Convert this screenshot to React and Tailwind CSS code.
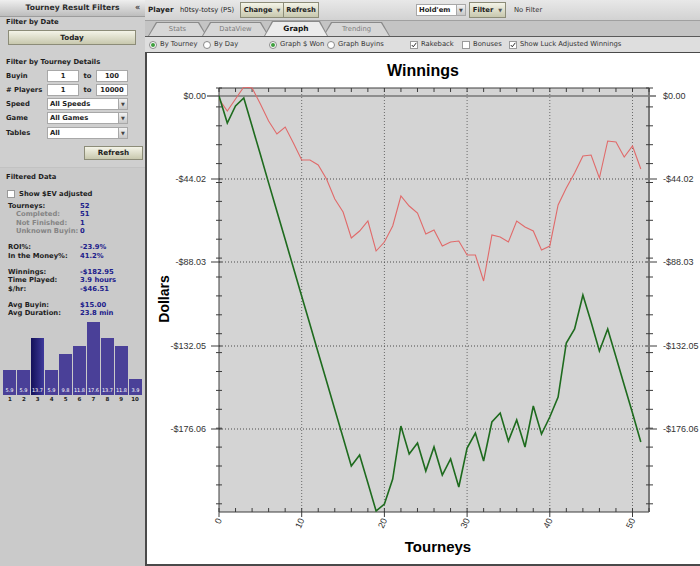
import React from 'react';

// chart geometry, page coordinates (svg viewBox is offset to match)
const X0 = 219, X1 = 649, Y0 = 89, Y1 = 513;
const tx = (t) => X0 + t * 8.27;

const green = [
  97, 124, 107, 99, 127.3, 155.6, 183.9, 212.2, 240.5, 268.8, 297.2, 325.5, 353.8, 382.1, 410.4, 438.7,
  467, 456, 484, 512, 505, 480, 427, 455, 444, 472, 448, 476, 460, 488, 449, 434, 462, 423, 414, 442,
  421, 448, 407, 435, 418, 398, 344, 330, 296, 323, 352, 330, 358, 386, 414, 443,
];
const red = [
  100, 112, 100, 88, 89, 105, 122, 135, 128, 144, 161, 161, 166, 180, 200, 213, 239, 232, 222, 252,
  243, 227, 197, 207, 214, 235, 231, 247, 243, 242, 256, 256, 282, 236, 238, 243, 222, 228, 232, 251,
  247, 206, 189, 174, 157, 156, 179, 142, 143, 158, 147, 170,
];

const yLabels = [
  ['$0.00', 97],
  ['-$44.02', 180],
  ['-$88.03', 263],
  ['-$132.05', 347],
  ['-$176.06', 430],
];

const bars = [5.9, 5.9, 13.7, 5.9, 9.8, 11.8, 17.6, 13.7, 11.8, 3.9];

const pts = (arr) => arr.map((y, i) => `${tx(i).toFixed(1)},${y}`).join(' ');

function WinningsChart() {
  const yTicks = [];
  for (let k = 0; k <= 22; k++) yTicks.push(Y0 + 18.9 * k);
  const xTicks = [];
  for (let k = 0; k <= 26; k++) xTicks.push(k);

  return (
    <svg width="553" height="510" viewBox="147 54 553 510" className="block">
      <defs>
        <clipPath id="plot">
          <rect x={X0} y={Y0 - 1} width={X1 - X0} height={Y1 - Y0 + 1} />
        </clipPath>
      </defs>
      <text x="423" y="77" textAnchor="middle" fontFamily="Liberation Sans, Arial, sans-serif" fontWeight="bold" fontSize="16" fill="#000">
        Winnings
      </text>

      <rect x={X0} y={Y0} width={X1 - X0} height={Y1 - Y0} fill="#d4d4d4" />

      {[10, 20, 30, 40, 50].map((v) => (
        <line key={v} x1={tx(v)} x2={tx(v)} y1={Y0} y2={Y1} stroke="#6a6a6a" strokeWidth="1" strokeDasharray="1 2" />
      ))}
      {yLabels.slice(1).map(([l, y]) => (
        <g key={l}>
          <line x1={X0} x2={X1} y1={y} y2={y} stroke="#4a4a4a" strokeWidth="1" strokeDasharray="1 2" />
          <line x1="211" x2={X0 + 3} y1={y} y2={y} stroke="#3c3c3c" />
          <line x1={X1 - 3} x2="657" y1={y} y2={y} stroke="#3c3c3c" />
        </g>
      ))}
      <line x1="207" x2="656" y1="97" y2="97" stroke="#8e8e8e" strokeWidth="2" />

      {/* axes */}
      <line x1={X0} x2={X0} y1={Y0} y2={Y1} stroke="#3c3c3c" />
      <line x1={X0} x2={X1} y1={Y0} y2={Y0} stroke="#3c3c3c" />
      <line x1={X0} x2={X1} y1={Y1} y2={Y1} stroke="#3c3c3c" />
      <line x1={X1} x2={X1} y1={Y0} y2={Y1} stroke="#7a7a7a" strokeWidth="2" />

      {yTicks.map((y) => (
        <g key={y}>
          <line x1={X0 - 3} x2={X0 + 3} y1={y} y2={y} stroke="#3c3c3c" />
          <line x1={X1 - 3} x2={X1 + 4} y1={y} y2={y} stroke="#3c3c3c" />
        </g>
      ))}
      {xTicks.map((k) => {
        const x = X0 + k * 16.54;
        const major = k % 5 === 0;
        return (
          <g key={k}>
            <line x1={x} x2={x} y1={Y1 - 4} y2={major ? Y1 + 5 : Y1} stroke="#3c3c3c" />
            <line x1={x} x2={x} y1={Y0} y2={Y0 + 4} stroke="#3c3c3c" />
          </g>
        );
      })}

      <g clipPath="url(#plot)">
        <polyline points={pts(red)} fill="none" stroke="#e06a6a" strokeWidth="1.1" />
        <polyline points={pts(green)} fill="none" stroke="#1e6b1e" strokeWidth="1.6" strokeLinejoin="miter" />
      </g>

      {yLabels.map(([l, y]) => (
        <g key={l} fontFamily="Liberation Sans, Arial, sans-serif" fontSize="9" fill="#333">
          <text x="206" y={y + 3}  textAnchor="end">{l}</text>
          <text x="663" y={y + 3}>{l}</text>
        </g>
      ))}
      {[0, 10, 20, 30, 40, 50].map((v) => (
        <text
          key={v}
          x={tx(v) + 3}
          y="521"
          textAnchor="end"
          fontFamily="Liberation Sans, Arial, sans-serif"
          fontSize="9"
          fill="#333"
          transform={`rotate(-65 ${tx(v) + 3} 521)`}
        >
          {v}
        </text>
      ))}

      <text x="169" y="300" textAnchor="middle" fontFamily="Liberation Sans, Arial, sans-serif" fontWeight="bold" fontSize="14" fill="#000" transform="rotate(-90 169 300)">
        Dollars
      </text>
      <text x="438" y="553" textAnchor="middle" fontFamily="Liberation Sans, Arial, sans-serif" fontWeight="bold" fontSize="15" fill="#000">
        Tourneys
      </text>
    </svg>
  );
}

const btn = 'bg-gradient-to-b from-[#f4f4e8] to-[#c8c8ae] border border-[#8c8c78] font-bold text-[#222] flex items-center justify-center';

function Field({ value }) {
  return <div className="w-[32px] h-[12px] bg-white border border-[#a8a8a8] flex items-center justify-center font-bold">{value}</div>;
}

function Select({ value, w = 'w-[81px]' }) {
  return (
    <div className={`${w} h-[12px] bg-white border border-[#a8a8a8] flex items-center`}>
      <span className="flex-1 pl-[2px] font-bold">{value}</span>
      <span className="w-[9px] h-full bg-gradient-to-b from-[#f2f2f2] to-[#c8c8c8] border-l border-[#a8a8a8] flex items-center justify-center text-[5px] text-[#444]">▼</span>
    </div>
  );
}

function Radio({ on }) {
  return (
    <span className="w-[8px] h-[8px] rounded-full bg-white border border-[#8a8a8a] flex items-center justify-center">
      {on && <span className="w-[4px] h-[4px] rounded-full bg-[#3f9f3f]" />}
    </span>
  );
}

function Check({ on }) {
  return (
    <span className="w-[8px] h-[8px] bg-white border border-[#9a9a9a] flex items-center justify-center">
      {on && (
        <svg width="6" height="6" viewBox="0 0 6 6">
          <polyline points="0.8,3 2.3,4.8 5.3,0.8" fill="none" stroke="#333" strokeWidth="1" />
        </svg>
      )}
    </span>
  );
}

const Tab = ({ label, w, active, first }) => (
  <div
    className={`${w} ${first ? '' : '-ml-[5px]'} ${active ? 'relative z-10 h-[15px]' : 'h-[14px]'} bg-[#8a8a8a] [clip-path:polygon(0_100%,8px_0,calc(100%-8px)_0,100%_100%)] pt-[1px] px-[1px]`}
  >
    <div
      className={`h-full flex items-center justify-center [clip-path:polygon(0_100%,8px_0,calc(100%-8px)_0,100%_100%)] ${
        active ? 'bg-[#ececec] text-[#111] font-bold text-[7.4px]' : 'bg-[#d7d7d7] text-[#7c7c7c]'
      }`}
    >
      {label}
    </div>
  </div>
);

function StatRow({ label, value, sub }) {
  return (
    <div className="flex h-[8.5px] items-center">
      <span className={`w-[72px] ${sub ? 'pl-[8px] text-[#858585]' : 'text-[#1e1e1e]'}`}>{label}</span>
      <span className="text-[#20208a]">{value}</span>
    </div>
  );
}

export default function App() {
  return (
    <div className="w-[700px] h-[566px] flex overflow-hidden bg-[#cdcdcd] font-['DejaVu_Sans',Verdana,sans-serif] text-[6.8px] leading-none">
      {/* left filter panel */}
      <aside className="w-[145px] shrink-0 flex flex-col bg-[#cfcfcf] text-[#1e1e1e] font-bold">
        <div className="h-[17px] flex items-center bg-gradient-to-b from-[#efefef] to-[#bdbdbd] border-b border-[#9c9c9c]">
          <span className="w-[10px]" />
          <span className="flex-1 text-center text-[7.6px] text-[#2c2c2c]">Tourney Result Filters</span>
          <span className="w-[10px] text-[8px] text-[#444]">«</span>
        </div>

        <div className="mt-[1px] ml-[6px] h-[8px] flex items-center">Filter by Date</div>
        <div className={`${btn} mt-[4px] ml-[8px] w-[128px] h-[15px] text-[7.2px]`}>Today</div>

        <div className="mt-[13px] ml-[6px] h-[8px] flex items-center">Filter by Tourney Details</div>

        <div className="mt-[4px] ml-[6px] flex items-center h-[12px]">
          <span className="w-[41px]">Buyin</span>
          <Field value="1" />
          <span className="w-[17px] text-center">to</span>
          <Field value="100" />
        </div>
        <div className="mt-[2px] ml-[6px] flex items-center h-[12px]">
          <span className="w-[41px]"># Players</span>
          <Field value="1" />
          <span className="w-[17px] text-center">to</span>
          <Field value="10000" />
        </div>
        <div className="mt-[2px] ml-[6px] flex items-center h-[12px]">
          <span className="w-[41px]">Speed</span>
          <Select value="All Speeds" />
        </div>
        <div className="mt-[2px] ml-[6px] flex items-center h-[12px]">
          <span className="w-[41px]">Game</span>
          <Select value="All Games" />
        </div>
        <div className="mt-[3px] ml-[6px] flex items-center h-[12px]">
          <span className="w-[41px]">Tables</span>
          <Select value="All" />
        </div>

        <div className={`${btn} mt-[7px] ml-[84px] w-[59px] h-[14px] text-[7.2px]`}>Refresh</div>

        <div className="mt-[7px] flex-1 flex flex-col bg-[#cacaca] border-t border-[#c2c2c2]">
          <div className="mt-[5px] ml-[6px] h-[8px] flex items-center">Filtered Data</div>
          <div className="mt-[9px] ml-[7px] h-[8px] flex items-center gap-[4px]">
            <Check on={false} />
            <span>Show $EV adjusted</span>
          </div>

          <div className="mt-[4px] ml-[8px]">
            <StatRow label="Tourneys:" value="52" />
            <StatRow label="Completed:" value="51" sub />
            <StatRow label="Not Finished:" value="1" sub />
            <StatRow label="Unknown Buyin:" value="0" sub />
          </div>
          <div className="mt-[7.5px] ml-[8px]">
            <StatRow label="ROI%:" value="-23.9%" />
            <StatRow label="In the Money%:" value="41.2%" />
          </div>
          <div className="mt-[7.5px] ml-[8px]">
            <StatRow label="Winnings:" value="-$182.95" />
            <StatRow label="Time Played:" value="3.9 hours" />
            <StatRow label="$/hr:" value="-$46.51" />
          </div>
          <div className="mt-[7.5px] ml-[8px]">
            <StatRow label="Avg Buyin:" value="$15.00" />
            <StatRow label="Avg Duration:" value="23.8 min" />
          </div>

          {/* buyin histogram */}
          <div className="mt-[1px] mx-[3px] h-[76px] flex items-end">
            {bars.map((v, i) => (
              <div
                key={i}
                className={`flex-1 mr-[1px] last:mr-0 flex items-end justify-center pb-[2px] text-white text-[5px] font-normal ${
                  i === 2 ? 'bg-gradient-to-r from-[#14105a] to-[#3f3a9c]' : 'bg-[#4a4098]'
                }`}
                style={{ height: `${v * 4.17}px` }}
              >
                {v}
              </div>
            ))}
          </div>
          <div className="mx-[3px] mt-[2px] flex text-[5.5px] text-[#222]">
            {bars.map((_, i) => (
              <span key={i} className="flex-1 text-center">{i + 1}</span>
            ))}
          </div>
        </div>
      </aside>

      {/* main area */}
      <main className="flex-1 flex flex-col bg-[#dcdcdc] text-[#222]">
        <div className="h-[21px] flex items-center bg-gradient-to-b from-[#e8e8e8] to-[#d2d2d2] border-b border-[#a0a0a0] pl-[3px]">
          <span className="w-[32px] font-bold text-[7.2px]">Player</span>
          <span className="w-[60px]">h0tsy-totsy (PS)</span>
          <div className="flex h-[16px]">
            <div className={`${btn} w-[44px] gap-[4px]`}>
              Change <span className="text-[5px] text-[#555]">▼</span>
            </div>
            <div className={`${btn} w-[35px] border-l-0`}>Refresh</div>
          </div>
          <div className="ml-[97px]">
            <Select value="Hold'em" w="w-[50px]" />
          </div>
          <div className={`${btn} ml-[3px] w-[37px] h-[16px] gap-[5px]`}>
            Filter <span className="text-[5px] text-[#555]">▼</span>
          </div>
          <span className="ml-[8px] text-[#333]">No Filter</span>
        </div>

        <div className="h-[16px] flex items-end bg-[#c4c4c4] border-b border-[#5a5a5a] pl-[3px]">
          <Tab label="Stats" w="w-[59px]" first />
          <Tab label="DataView" w="w-[67px]" />
          <Tab label="Graph" w="w-[64px]" active />
          <Tab label="Trending" w="w-[67px]" />
        </div>

        <div className="h-[15px] flex items-center bg-[#dedede] text-[#333] pl-[4px]">
          <span className="flex items-center gap-[3px] w-[54px]"><Radio on />By Tourney</span>
          <span className="flex items-center gap-[3px] w-[66px]"><Radio />By Day</span>
          <span className="flex items-center gap-[3px] w-[58px]"><Radio on />Graph $ Won</span>
          <span className="flex items-center gap-[3px] w-[83px]"><Radio />Graph Buyins</span>
          <span className="flex items-center gap-[3px] w-[52px]"><Check on />Rakeback</span>
          <span className="flex items-center gap-[3px] w-[47px]"><Check />Bonuses</span>
          <span className="flex items-center gap-[3px]"><Check on />Show Luck Adjusted Winnings</span>
        </div>

        <div className="flex-1 bg-white border-l-2 border-b-2 border-t border-[#4a4a4a]">
          <WinningsChart />
        </div>
      </main>
    </div>
  );
}
